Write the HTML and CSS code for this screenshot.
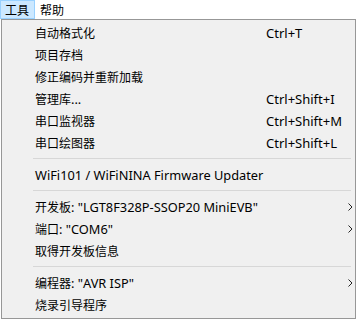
FILE: index.html
```html
<!DOCTYPE html>
<html lang="zh-CN">
<head>
  <meta charset="UTF-8">
  <title>工具</title>
  <link rel="stylesheet" href="styles.css">
</head>
<body>
  <div class="menubar">
    <span class="top active">工具</span>
    <span class="top">帮助</span>
  </div>
  <div class="menu">
    <div class="item"><span class="label">自动格式化</span><span class="key">Ctrl+T</span></div>
    <div class="item"><span class="label">项目存档</span></div>
    <div class="item"><span class="label">修正编码并重新加载</span></div>
    <div class="item"><span class="label">管理库<span class="en">...</span></span><span class="key">Ctrl+Shift+I</span></div>
    <div class="item"><span class="label">串口监视器</span><span class="key">Ctrl+Shift+M</span></div>
    <div class="item"><span class="label">串口绘图器</span><span class="key">Ctrl+Shift+L</span></div>
    <div class="sep"></div>
    <div class="item"><span class="label en">WiFi101 / WiFiNINA Firmware Updater</span></div>
    <div class="sep"></div>
    <div class="item">
      <span class="label">开发板<span class="en">: "LGT8F328P-SSOP20 MiniEVB"</span></span>
      <svg class="arrow" width="5" height="8" viewBox="0 0 5 8"><polyline points="0.5,0.5 4,4 0.5,7.5" fill="none" stroke="#222" stroke-width="1"/></svg>
    </div>
    <div class="item">
      <span class="label">端口<span class="en">: "COM6"</span></span>
      <svg class="arrow" width="5" height="8" viewBox="0 0 5 8"><polyline points="0.5,0.5 4,4 0.5,7.5" fill="none" stroke="#222" stroke-width="1"/></svg>
    </div>
    <div class="item"><span class="label">取得开发板信息</span></div>
    <div class="sep"></div>
    <div class="item">
      <span class="label">编程器<span class="en">: "AVR ISP"</span></span>
      <svg class="arrow" width="5" height="8" viewBox="0 0 5 8"><polyline points="0.5,0.5 4,4 0.5,7.5" fill="none" stroke="#222" stroke-width="1"/></svg>
    </div>
    <div class="item"><span class="label">烧录引导程序</span></div>
  </div>
</body>
</html>
```

FILE: styles.css
```css
body {
  margin: 0;
  background-color: #fff;
  font-family: "Noto Sans CJK SC", "Noto Sans", sans-serif;
  font-size: 12px;
  color: #000;
}

.menubar {
  display: flex;
  height: 19px;
}

.top {
  display: flex;
  align-items: center;
  padding: 0 5px 1px 4px;
  border: 1px solid transparent;
  height: 16px;
}

.top.active {
  background-color: #cce8ff;
  border-color: #99d1ff;
}

.menu {
  width: 353px;
  margin-left: 1px;
  background-color: #f0f0f0;
  border: 1px solid #979797;
  padding: 2px 0;
}

.item {
  display: flex;
  align-items: center;
  height: 22px;
  box-sizing: border-box;
  padding-bottom: 1px;
  position: relative;
}

.label {
  padding-left: 33px;
  width: 231px;
  white-space: nowrap;
}

.en {
  font-family: "Noto Sans", sans-serif;
  font-size: 12.8px;
}

.key {
  font-family: "Noto Sans", sans-serif;
  font-size: 13px;
  white-space: nowrap;
}

.arrow {
  position: absolute;
  left: 346px;
  top: 7px;
}

.sep {
  height: 1px;
  margin: 4px 4px 5px 31px;
  background-color: #d7d7d7;
}
```
